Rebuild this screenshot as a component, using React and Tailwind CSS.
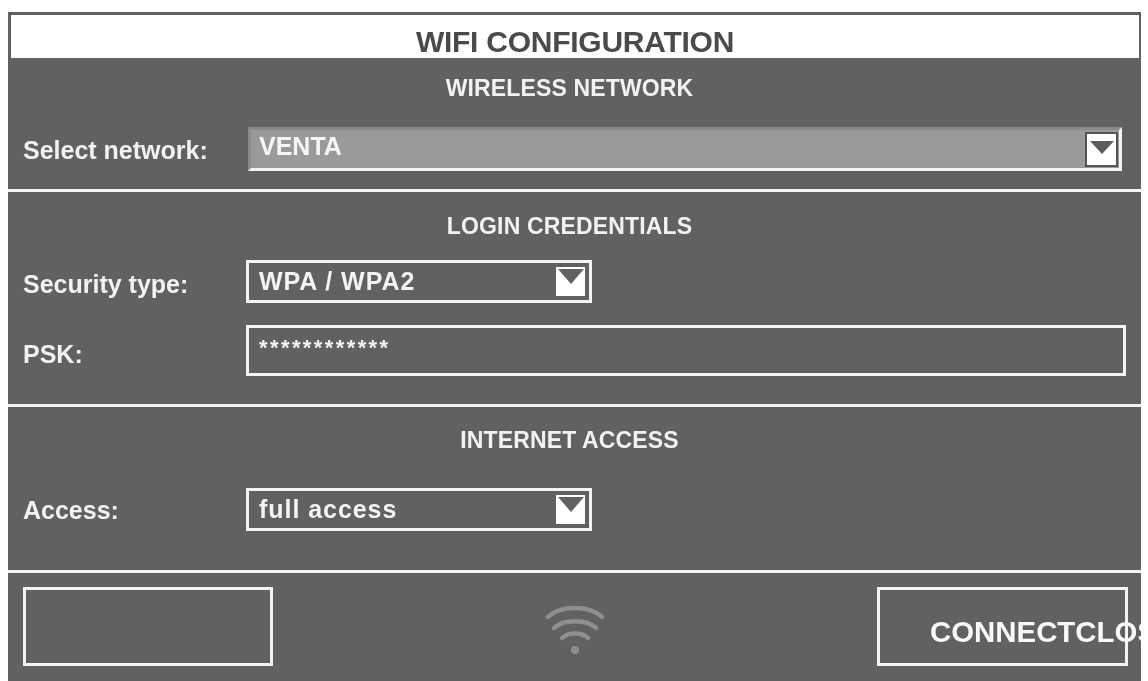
const font = { fontFamily: '"Liberation Sans", Arial, sans-serif' };

function Select({ children }) {
  return (
    <div className="flex h-[43px] w-[346px] items-center justify-between border-[3px] border-[#f4f4f4] pl-[10px] pr-[4px]">
      <span className="text-[25px] font-bold tracking-[0.95px] text-[#f4f4f4]">{children}</span>
      <span className="flex h-[29px] w-[29px] items-start justify-center bg-white">
        <svg width="26" height="15" viewBox="0 0 26 15" className="mt-[2px]">
          <path d="M0 0H26L13 15Z" fill="#626262" />
        </svg>
      </span>
    </div>
  );
}

function Heading({ children }) {
  return <div className="pr-[10px] text-center text-[23px] font-bold leading-[26px] tracking-[0.15px] text-[#f2f2f2]">{children}</div>;
}

function Label({ children, className }) {
  return <div className={`w-[223px] shrink-0 text-[25px] font-bold text-[#f2f2f2] ${className}`}>{children}</div>;
}

export default function App() {
  return (
    <div className="h-[681px] w-[1148px] overflow-hidden bg-white pl-2 pr-[7px] pt-3 blur-[0.4px]" style={font}>
      <div className="flex h-[669px] flex-col overflow-hidden bg-[#616161]">
        <div className="ml-[3px] mr-[2px] mt-[3px] h-[43px] shrink-0 bg-white text-center text-[30px] font-bold leading-[53px] tracking-[-0.25px] text-[#4a4a4a]">
          WIFI CONFIGURATION
        </div>

        <section className="h-[131px] shrink-0 pl-[15px] pr-[15px] pt-[17px]">
          <Heading>WIRELESS NETWORK</Heading>
          <div className="mr-[4px] mt-[26px] flex items-center">
            <Label className="pt-[4px]">Select network:</Label>
            <div className="ml-[2px] flex h-[44px] flex-1 items-center justify-between border-[3px] border-b-[#f4f4f4] border-l-[#8a8a8a] border-r-[#f4f4f4] border-t-[#8a8a8a] bg-[#9a9a9a] pl-[8px] pr-[1px]">
              <span className="relative -top-[2px] text-[25px] font-bold text-[#f6f6f6]">VENTA</span>
              <span className="flex h-[35px] w-[33px] items-start justify-center border-[2px] border-[#555555] bg-white">
                <svg width="24" height="13" viewBox="0 0 24 13" className="mt-[7px]">
                  <path d="M0 0H24L12 13Z" fill="#5c5c5c" />
                </svg>
              </span>
            </div>
          </div>
        </section>

        <section className="h-[215px] shrink-0 border-t-[3px] border-[#f4f4f4] pl-[15px] pr-[15px] pt-[21px]">
          <Heading>LOGIN CREDENTIALS</Heading>
          <div className="mt-[21px] flex items-center">
            <Label className="pt-[6px]">Security type:</Label>
            <Select>WPA / WPA2</Select>
          </div>
          <div className="mt-[21px] flex items-center">
            <Label className="pt-[10px]">PSK:</Label>
            <div className="flex h-[51px] flex-1 items-start border-[3px] border-[#f4f4f4] pl-[10px] pt-[3px] text-[22px] font-bold tracking-[2.4px] text-[#f4f4f4]">
              ************
            </div>
          </div>
        </section>

        <section className="h-[166px] shrink-0 border-t-[3px] border-[#f4f4f4] pl-[15px] pr-[15px] pt-[20px]">
          <Heading>INTERNET ACCESS</Heading>
          <div className="mt-[35px] flex items-center">
            <Label className="pt-[3px]">Access:</Label>
            <Select>full access</Select>
          </div>
        </section>

        <footer className="flex flex-1 items-start justify-between border-t-[3px] border-[#f4f4f4] pl-[15px] pr-[13px] pt-[14px]">
          <div className="h-[79px] w-[250px] border-[3px] border-[#f4f4f4]" />
          <svg width="60" height="52" viewBox="0 0 60 52" className="mt-[16px]" fill="none" stroke="#8f8f8f" strokeLinecap="round" strokeWidth="4.5">
            <path d="M3 14C15 2 45 2 57 14" />
            <path d="M9 25C18 16 42 16 51 25" />
            <path d="M17 35C23 29 37 29 43 35" />
            <circle cx="30" cy="47" r="4" fill="#8f8f8f" stroke="none" />
          </svg>
          <div className="flex h-[79px] w-[251px] items-center whitespace-nowrap border-[3px] border-[#f4f4f4] pl-[50px] pt-[11px] text-[29.4px] font-bold text-[#f8f8f8]">
            CONNECTCLOSE
          </div>
        </footer>
      </div>
    </div>
  );
}
